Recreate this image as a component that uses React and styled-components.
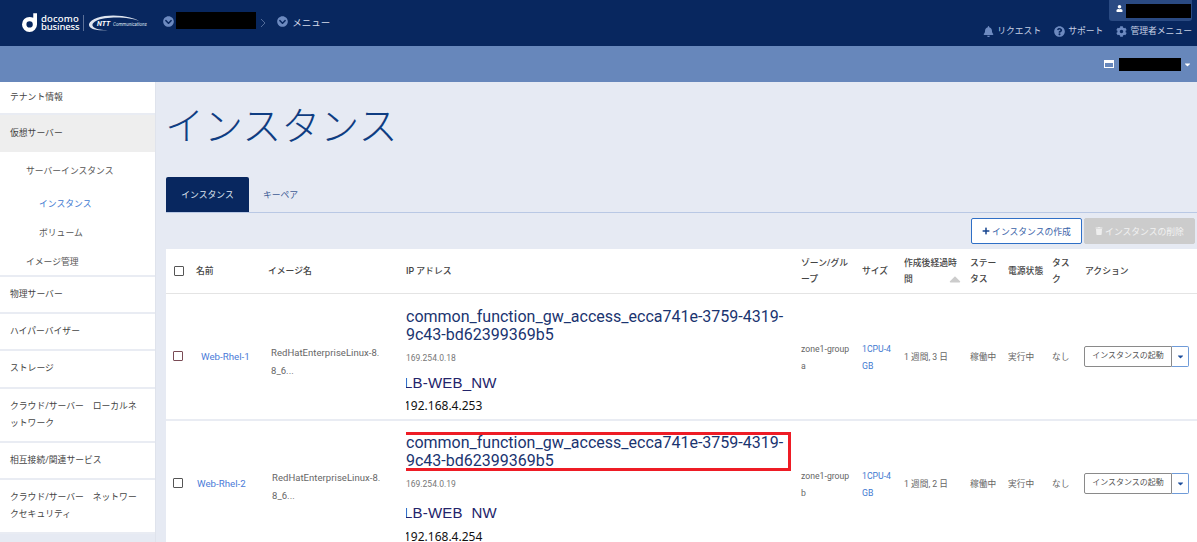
import React from "react";
import styled, { createGlobalStyle } from "styled-components";
import { FaBell, FaQuestionCircle, FaCog, FaUser, FaChevronCircleDown, FaPlus, FaTrash, FaCaretDown, FaCaretUp } from "react-icons/fa";

const Global = createGlobalStyle`
  html, body { margin: 0; padding: 0; height: 542px; overflow: hidden; background: #e6eaf3; }
  body { font-family: Roboto, "Noto Sans CJK JP", "Noto Sans", sans-serif; color: #444; }
  * { box-sizing: border-box; }
`;
const Page = styled.div`width: 1197px; height: 542px; overflow: hidden; display: flex; flex-direction: column;`;
const Header = styled.header`height: 46px; flex: none; background: #08275f; display: flex; justify-content: space-between; padding-left: 22px;`;
const Left = styled.div`display: flex; align-items: center; color: #d5dcea; font-size: 9.5px;`;
const Brand = styled.div`display: flex; align-items: center; width: 141px; margin-top: -1px;`;
const BrandText = styled.div`color: #fff; font: 500 9.5px/8.5px "Noto Sans", sans-serif; margin-left: 4px; padding-top: 1px; width: 36px; white-space: nowrap;`;
const Word = styled.span`display: block; letter-spacing: ${p => p.$ls}px;`;
const Divider = styled.div`width: 1px; height: 16px; background: #5b7098; margin: 0 4px 0 6px;`;
const Crumb = styled.div`display: flex; align-items: center; gap: 2px; color: #d5dcea; margin-top: -3px;`;
const CrumbIcon = styled(FaChevronCircleDown)`color: #6d8ac0; font-size: 11px; flex: none;`;
const Redact = styled.div`background: #000; flex: none; width: ${p => p.$w}px; height: ${p => p.$h}px; margin-top: ${p => p.$mt ?? 0}px;`;
const Sep = styled.svg`width: 7px; height: 10px; margin: 0 10px 0 4px;`;
const Right = styled.div`display: flex; flex-direction: column; align-items: flex-end; padding-right: 5px;`;
const UserBox = styled.div`width: 83px; height: 21px; background: #2a4a82; border-radius: 0 0 3px 3px; display: flex; align-items: flex-start; padding: 4px 0 0 7px; gap: 3px; color: #fff; font-size: 7px;`;
const Links = styled.nav`display: flex; gap: 13px; margin-top: 3px; color: #c6d0e4; font-size: 8.8px; line-height: 14px;`;
const LinkItem = styled.span`display: flex; align-items: center; gap: 3px; svg { color: #6d8ac0; font-size: 11px; }`;
const SubHeader = styled.div`height: 36px; flex: none; background: #6787bb; display: flex; justify-content: flex-end; align-items: center; padding-right: 5px; color: #fff; gap: 5px;`;
const CardIcon = styled.svg`width: 10px; height: 8px;`;
const TenantCaret = styled(FaCaretDown)`font-size: 9px; margin-left: -3px;`;
const Body = styled.div`display: flex; flex: 1; min-height: 0;`;
const Sidebar = styled.aside`width: 156px; flex: none; border-right: 1px solid #dfe3ec; background: #e6eaf3;`;
const SideGroup = styled.div`background: #fff; border-bottom: ${p => p.$open ? "2px solid #e9ecf3" : "2px solid #e9ecf3"};`;
const SideItem = styled.div`
  font-size: 8.8px; line-height: 17px; color: #444; padding: 0 10px 1px;
  background: ${p => p.$active ? "#eeeeee" : "#fff"};
  height: ${p => p.$h}px; display: flex; align-items: center;
`;
const SubItem = styled.div`
  font-size: 8.8px; color: ${p => p.$current ? "#3f7ad1" : "#555"};
  height: ${p => p.$h}px; display: flex; align-items: center;
  padding-left: ${p => p.$indent}px;
`;
const Main = styled.main`flex: 1; min-width: 0; padding-left: 10px;`;
const Title = styled.h1`margin: 12px 0 0 -1px; font: 300 39px/58px "Noto Sans CJK JP", sans-serif; color: #0f3d82;`;
const Tabs = styled.div`margin-top: 25px; border-bottom: 1.5px solid #b9c8e4; display: flex; height: 36px;`;
const Tab = styled.div`
  width: 83px; display: flex; align-items: center; justify-content: center; font-size: 8.8px;
  background: ${p => p.$active ? "#08275f" : "transparent"};
  color: ${p => p.$active ? "#dfe5f0" : "#3e5c95"};
  border-radius: 2px 2px 0 0; margin-right: ${p => p.$active ? "-10px" : 0};
`;
const Actions = styled.div`display: flex; justify-content: flex-end; gap: 2px; padding: 5px 2px 5px 0;`;
const ActionBtn = styled.div`
  width: 111px; height: 26px; border-radius: 2px; font-size: 8.8px; display: flex; align-items: center; justify-content: center; gap: 2px;
  background: ${p => p.$off ? "#cccccc" : "#fff"};
  color: ${p => p.$off ? "#f2f2f2" : "#3a63a8"};
  border: 1px solid ${p => p.$off ? "#cccccc" : "#2f6fc6"};
  svg { font-size: 8px; color: ${p => p.$off ? "#eee" : "#16448f"}; }
`;
const Table = styled.table`width: 1031px; border-collapse: collapse; table-layout: fixed; background: #fff;`;
const Th = styled.th`
  height: 44px; padding: 0 ${p => p.$pr ?? 0}px 0 0; text-align: left; font-weight: 500; font-size: 8.8px; line-height: 16px; color: #444;
  border-bottom: 1px solid #e4e4e4; position: relative; word-break: break-all;
`;
const Td = styled.td`
  padding: ${p => p.$pt ?? 3}px 0 0 ${p => p.$pl ?? 0}px; font-size: 8.7px; line-height: 16.5px; color: #666;
  vertical-align: middle; border-bottom: 2px solid #e9ecf3; word-break: break-all;
`;
const ImageTd = styled(Td)`font-size: 9.5px; line-height: 18px; letter-spacing: .05px;`;
const Check = styled.span`display: block; width: 10px; height: 10px; border: 1.3px solid ${p => p.$red ? "#7a4b55" : "#555"}; border-radius: 1px; margin-left: ${p => p.$ml}px;`;
const SortMark = styled(FaCaretUp)`position: absolute; right: 6px; bottom: 5px; font-size: 18px; color: #ccc;`;
const NameLink = styled.a`color: #4a7bd8; font-size: 9.7px;`;
const SizeLink = styled.a`color: #3f7ad1;`;
const IpCell = styled.div`padding-top: ${p => p.$pt}px; height: 125px; overflow: hidden;`;
const NetName = styled.div`
  position: relative; font-size: 16px; line-height: 18px; color: #1a3470; width: 381px;
  ${p => p.$mark && `&::after { content: ""; position: absolute; top: -2px; bottom: -1px; left: -4px; right: -4px; border: 3px solid #ee1c25; }`}
`;
const SmallIp = styled.div`font-size: 8.5px; line-height: 12px; color: #777; margin-top: ${p => p.$mt}px;`;
const LanName = styled.div`font: 15px/18px "Liberation Sans", sans-serif; color: #23246b; margin: ${p => p.$mt}px 0 0 -2px; letter-spacing: .2px; white-space: pre;`;
const LanIp = styled.div`font: 12px/14px "Noto Sans", sans-serif; color: #111; margin: ${p => p.$mt}px 0 0 -2px;`;
const Split = styled.div`display: flex; height: 21px; width: 105px; margin-left: -1px;`;
const SplitMain = styled.div`width: 88px; border: 1px solid #8a8a8a; border-radius: 2px 0 0 2px; font-size: 8px; color: #555; display: flex; align-items: center; justify-content: center; white-space: nowrap;`;
const SplitCaret = styled.div`width: 17px; border: 1px solid #6f9bd8; border-left: 0; border-radius: 0 2px 2px 0; display: flex; align-items: center; justify-content: center; color: #1f4f9c; font-size: 9px;`;

const Logo = () => (
  <svg width="15" height="21" viewBox="4 1 16 20" aria-hidden="true">
    <path d="M16 1h4v12a8 8 0 1 1-8-8c1.5 0 2.8.4 4 1z M12 9.6a3.4 3.4 0 1 0 3.5 3.4A3.4 3.4 0 0 0 12 9.6z" fill="#fff" fillRule="evenodd" />
  </svg>
);
const NttLogo = () => (
  <svg width="62" height="18" viewBox="0 0 62 18" aria-hidden="true">
    <path d="M1 10C3 3 20 0 34 2c8 1 14 3 17 5C42 3 18 2 8 7 4 9 3 12 7 14c4 2 10 2 13 2-8 1-20 0-19-6z" fill="#dfe5f0" />
    <text x="9" y="12" fontSize="7" fontStyle="italic" fontWeight="700" fill="#fff" fontFamily="Roboto">NTT</text>
    <text x="25" y="11.5" fontSize="4.6" fontStyle="italic" fill="#dfe5f0" fontFamily="Roboto">Communications</text>
  </svg>
);

const rows = [
  { n: "Web-Rhel-1", np: 5, ip: 3, imgPt: 12, pt: 14, a: 8, b: 10, c: 7, lan: "LB-WEB_NW", ipa: "169.254.0.18", lip: "192.168.4.253", z: "a", t: "1 週間, 3 日" },
  { n: "Web-Rhel-2", np: 1, ip: 4, imgPt: 7, pt: 13, a: 8, b: 14, c: 8, lan: "LB-WEB  NW", ipa: "169.254.0.19", lip: "192.168.4.254", z: "b", t: "1 週間, 2 日", mark: true },
];

export default function App() {
  return (
    <Page>
      <Global />
      <Header>
        <Left>
          <Brand>
            <Logo />
            <BrandText><Word $ls={0.15}>docomo</Word><Word $ls={-0.15}>business</Word></BrandText>
            <Divider />
            <NttLogo />
          </Brand>
          <Crumb><CrumbIcon /><Redact $w={80} $h={17} $mt={-3} /></Crumb>
          <Sep viewBox="0 0 7 10"><path d="M1 1l4 4-4 4" fill="none" stroke="#506a98" /></Sep>
          <Crumb><CrumbIcon /><span>&nbsp;メニュー</span></Crumb>
        </Left>
        <Right>
          <UserBox><FaUser style={{ marginTop: 1 }} /><Redact $w={65} $h={14} /></UserBox>
          <Links>
            <LinkItem><FaBell />リクエスト</LinkItem>
            <LinkItem><FaQuestionCircle />サポート</LinkItem>
            <LinkItem><FaCog />管理者メニュー</LinkItem>
          </Links>
        </Right>
      </Header>
      <SubHeader>
        <CardIcon viewBox="0 0 10 8"><path d="M0 0h10v8H0z M1 3v4h8V3z" fill="#fff" fillRule="evenodd" /></CardIcon>
        <Redact $w={62} $h={13} />
        <TenantCaret />
      </SubHeader>
      <Body>
        <Sidebar>
          <SideGroup><SideItem $h={31}>テナント情報</SideItem></SideGroup>
          <SideGroup $open>
            <SideItem $h={37} $active>仮想サーバー</SideItem>
            <SubItem $h={36} $indent={26}>サーバーインスタンス</SubItem>
            <SubItem $h={30} $indent={39} $current>インスタンス</SubItem>
            <SubItem $h={29} $indent={39}>ボリューム</SubItem>
            <SubItem $h={28} $indent={26}>イメージ管理</SubItem>
          </SideGroup>
          <SideGroup><SideItem $h={35}>物理サーバー</SideItem></SideGroup>
          <SideGroup><SideItem $h={35}>ハイパーバイザー</SideItem></SideGroup>
          <SideGroup><SideItem $h={36}>ストレージ</SideItem></SideGroup>
          <SideGroup><SideItem $h={52}>クラウド/サーバー　ローカルネットワーク</SideItem></SideGroup>
          <SideGroup><SideItem $h={35}>相互接続/関連サービス</SideItem></SideGroup>
          <SideGroup><SideItem $h={52}>クラウド/サーバー　ネットワークセキュリティ</SideItem></SideGroup>
        </Sidebar>
        <Main>
          <Title>インスタンス</Title>
          <Tabs><Tab $active>インスタンス</Tab><Tab>キーペア</Tab></Tabs>
          <Actions>
            <ActionBtn><FaPlus />インスタンスの作成</ActionBtn>
            <ActionBtn $off><FaTrash />インスタンスの削除</ActionBtn>
          </Actions>
          <Table>
            <colgroup>
              <col style={{ width: 30 }} /><col style={{ width: 72 }} /><col style={{ width: 138 }} /><col style={{ width: 395 }} />
              <col style={{ width: 61 }} /><col style={{ width: 42 }} /><col style={{ width: 66 }} /><col style={{ width: 38 }} />
              <col style={{ width: 44 }} /><col style={{ width: 33 }} /><col style={{ width: 112 }} />
            </colgroup>
            <thead>
              <tr>
                <Th><Check $ml={8} /></Th>
                <Th>名前</Th>
                <Th>イメージ名</Th>
                <Th>IP アドレス</Th>
                <Th $pr={12}>ゾーン/グループ</Th>
                <Th>サイズ</Th>
                <Th $pr={8}>作成後経過時間<SortMark /></Th>
                <Th $pr={8}>ステータス</Th>
                <Th>電源状態</Th>
                <Th $pr={12}>タスク</Th>
                <Th>アクション</Th>
              </tr>
            </thead>
            <tbody>
              {rows.map(r => (
                <tr key={r.n}>
                  <Td $pt={0}><Check $red={!r.mark} $ml={7} /></Td>
                  <Td $pl={r.np}><NameLink>{r.n}</NameLink></Td>
                  <ImageTd $pl={r.ip} $pt={r.imgPt}>RedHatEnterpriseLinux-8.<br />8_6...</ImageTd>
                  <Td $pt={0}>
                    <IpCell $pt={r.pt}>
                      <NetName $mark={r.mark}>common_function_gw_access_ecca741e-3759-4319-9c43-bd62399369b5</NetName>
                      <SmallIp $mt={r.a}>{r.ipa}</SmallIp>
                      <LanName $mt={r.b}>{r.lan}</LanName>
                      <LanIp $mt={r.c}>{r.lip}</LanIp>
                    </IpCell>
                  </Td>
                  <Td>zone1-group<br />{r.z}</Td>
                  <Td><SizeLink>1CPU-4<br />GB</SizeLink></Td>
                  <Td>{r.t}</Td>
                  <Td>稼働中</Td>
                  <Td>実行中</Td>
                  <Td>なし</Td>
                  <Td $pt={1}>
                    <Split>
                      <SplitMain>インスタンスの起動</SplitMain>
                      <SplitCaret><FaCaretDown /></SplitCaret>
                    </Split>
                  </Td>
                </tr>
              ))}
            </tbody>
          </Table>
        </Main>
      </Body>
    </Page>
  );
}
